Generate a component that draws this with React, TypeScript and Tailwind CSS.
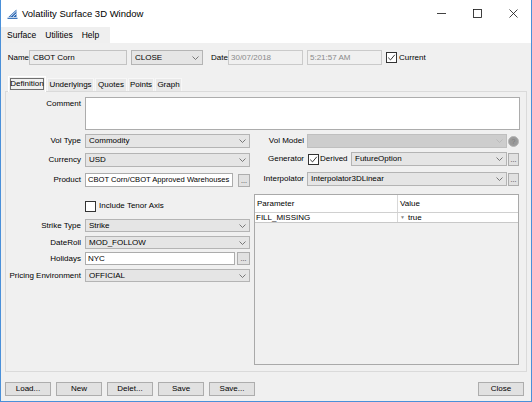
import React from "react";

function Chevron({ color = "#6a6a6a" }: { color?: string }) {
  return (
    <svg width="7" height="4" viewBox="0 0 7 4" className="shrink-0">
      <path d="M0.5 0.5 L3.5 3.5 L6.5 0.5" fill="none" stroke={color} strokeWidth="0.9" />
    </svg>
  );
}

function Combo({ className, children, disabled }: { className: string; children?: React.ReactNode; disabled?: boolean }) {
  return (
    <div
      className={
        "flex items-center border pl-[3px] pr-[3px] text-[8px] leading-none " +
        (disabled ? "bg-[#cdcdcd] border-[#bfbfbf] " : "bg-[#e5e5e5] border-[#b4b4b4] ") +
        className
      }
    >
      <span className="flex-1 truncate">{children}</span>
      <Chevron color={disabled ? "#b8b8b8" : "#6a6a6a"} />
    </div>
  );
}

function Field({ className, children }: { className: string; children?: React.ReactNode }) {
  return (
    <div className={"flex items-center border bg-white border-[#acacac] pl-[2px] leading-none whitespace-nowrap overflow-hidden " + className}>
      {children}
    </div>
  );
}

function Dots({ className }: { className: string }) {
  return (
    <div className={"flex items-end justify-center border border-[#adadad] bg-[#e1e1e1] pb-[2px] text-[7px] leading-none text-[#333] " + className}>
      ...
    </div>
  );
}

function Check({ checked }: { checked?: boolean }) {
  return (
    <div className="w-[11px] h-[11px] border border-[#333] bg-white flex items-center justify-center shrink-0">
      {checked && (
        <svg width="9" height="9" viewBox="0 0 9 9">
          <path d="M1.2 4.6 L3.5 6.9 L7.8 1.8" fill="none" stroke="#222" strokeWidth="0.9" />
        </svg>
      )}
    </div>
  );
}

function Label({ children, className = "" }: { children: React.ReactNode; className?: string }) {
  return <div className={"text-right text-[8px] leading-none whitespace-nowrap shrink-0 " + className}>{children}</div>;
}

function Btn({ children, className = "" }: { children: React.ReactNode; className?: string }) {
  return (
    <div className={"h-[14px] w-[46px] flex items-center justify-center border border-[#adadad] bg-[#e1e1e1] text-[8px] leading-none " + className}>
      {children}
    </div>
  );
}

export default function App() {
  return (
    <div className="w-[532px] h-[402px] bg-[#f0f0f0] border-x border-b border-[#4a90d9] flex flex-col overflow-hidden text-black font-['Liberation_Sans',Arial,sans-serif]">
      {/* Title bar */}
      <div className="h-[27px] bg-white flex items-center shrink-0">
        <div className="ml-[6px] w-[11px] h-[10px]">
          <svg width="11" height="10" viewBox="0 0 11 10">
            <polygon points="1.5,8 9.5,0.5 9.5,8" fill="#2b68b5" />
            <line x1="3.5" y1="7.5" x2="9.5" y2="2" stroke="#ffffff" strokeWidth="0.8" />
            <line x1="6" y1="7.8" x2="9.5" y2="4.6" stroke="#ffffff" strokeWidth="0.8" />
            <line x1="0.5" y1="9.3" x2="10.5" y2="9.3" stroke="#2b68b5" strokeWidth="1.2" />
          </svg>
        </div>
        <div className="ml-[4px] text-[9.5px] leading-none text-black">Volatility Surface 3D Window</div>
        <div className="ml-auto flex h-full">
          <div className="w-[36px] flex items-center justify-center">
            <svg width="9" height="9" viewBox="0 0 9 9">
              <line x1="0" y1="4.5" x2="9" y2="4.5" stroke="#111" strokeWidth="0.8" />
            </svg>
          </div>
          <div className="w-[36px] flex items-center justify-center">
            <svg width="9" height="9" viewBox="0 0 9 9">
              <rect x="0.5" y="0.5" width="8" height="8" fill="none" stroke="#111" strokeWidth="0.8" />
            </svg>
          </div>
          <div className="w-[36px] flex items-center justify-center">
            <svg width="9" height="9" viewBox="0 0 9 9">
              <path d="M0.5 0.5 L8.5 8.5 M8.5 0.5 L0.5 8.5" fill="none" stroke="#111" strokeWidth="0.8" />
            </svg>
          </div>
        </div>
      </div>

      {/* Menu bar */}
      <div className="h-[16px] bg-white flex shrink-0">
        <div className="w-[109px] bg-[#efefef] flex items-center gap-[9px] pl-[6px] text-[8.5px] leading-none">
          <span>Surface</span>
          <span>Utilities</span>
          <span>Help</span>
        </div>
      </div>

      {/* Top row */}
      <div className="mt-[7px] h-[15px] flex items-center pl-[4px] shrink-0">
        <Label className="w-[24px] text-left">Name</Label>
        <div className="w-[98px] h-full flex items-center border border-[#c3c3c3] bg-[#ececec] pl-[3px] text-[8px] leading-none">CBOT Corn</div>
        <Combo className="ml-[4px] w-[72px] h-full">CLOSE</Combo>
        <Label className="ml-[4px] w-[21px] text-left">Date</Label>
        <div className="w-[75px] h-full flex items-center border border-[#cacaca] bg-[#f0f0f0] pl-[2px] text-[8px] leading-none text-[#8a8a8a]">30/07/2018</div>
        <div className="ml-[4px] w-[75px] h-full flex items-center border border-[#cacaca] bg-[#f0f0f0] pl-[2px] text-[8px] leading-none text-[#8a8a8a]">5:21:57 AM</div>
        <div className="ml-[4px]">
          <Check checked />
        </div>
        <span className="ml-[2px] text-[8px] leading-none">Current</span>
      </div>

      {/* Tabs */}
      <div className="mt-[11px] h-[15px] flex items-end pl-[7px] gap-[1px] shrink-0">
        <div className="relative z-10 -mb-[1px] h-[16px] w-[38px] bg-[#f0f0f0] border-x border-t border-white flex items-start pt-[1px] px-[1px]">
          <div className="w-full h-[12px] border border-[#6f6f6f] flex items-center justify-center text-[8px] leading-none">Definition</div>
        </div>
        <div className="h-[13px] w-[47px] bg-[#e8e8e8] border-x border-t border-[#f7f7f7] flex items-center justify-center text-[8px] leading-none">Underlyings</div>
        <div className="h-[13px] w-[32px] bg-[#e8e8e8] border-x border-t border-[#f7f7f7] flex items-center justify-center text-[8px] leading-none">Quotes</div>
        <div className="h-[13px] w-[26px] bg-[#e8e8e8] border-x border-t border-[#f7f7f7] flex items-center justify-center text-[8px] leading-none">Points</div>
        <div className="h-[13px] w-[27px] bg-[#e8e8e8] border-x border-t border-[#f7f7f7] flex items-center justify-center text-[8px] leading-none">Graph</div>
      </div>

      {/* Tab panel */}
      <div className="ml-[4px] w-[522px] h-[281px] border border-[#dadada] flex flex-col pt-[5px] shrink-0">
        {/* Comment */}
        <div className="flex">
          <Label className="w-[75px] mr-[4px] pt-[3px]">Comment</Label>
          <div className="w-[435px] h-[33px] bg-white border border-[#acacac]" />
        </div>

        <div className="mt-[4px] flex">
          {/* Left column */}
          <div className="w-[244px] flex flex-col">
            <div className="h-[14px] flex items-center">
              <Label className="w-[75px] mr-[4px]">Vol Type</Label>
              <Combo className="w-[165px] h-full">Commodity</Combo>
            </div>
            <div className="mt-[5px] h-[14px] flex items-center">
              <Label className="w-[75px] mr-[4px]">Currency</Label>
              <Combo className="w-[165px] h-full">USD</Combo>
            </div>
            <div className="mt-[6px] h-[14px] flex items-center">
              <Label className="w-[75px] mr-[4px]">Product</Label>
              <Field className="w-[148px] h-full text-[7.6px] pl-[1px]">CBOT Corn/CBOT Approved Warehouses</Field>
              <Dots className="ml-[5px] w-[12px] h-[13px]" />
            </div>
            <div className="mt-[13px] h-[12px] flex items-center">
              <div className="w-[79px] shrink-0" />
              <Check />
              <span className="ml-[3px] text-[8px] leading-none">Include Tenor Axis</span>
            </div>
            <div className="mt-[7px] h-[13px] flex items-center">
              <Label className="w-[75px] mr-[4px]">Strike Type</Label>
              <Combo className="w-[165px] h-full">Strike</Combo>
            </div>
            <div className="mt-[4px] h-[13px] flex items-center">
              <Label className="w-[75px] mr-[4px]">DateRoll</Label>
              <Combo className="w-[165px] h-full">MOD_FOLLOW</Combo>
            </div>
            <div className="mt-[3px] h-[13px] flex items-center">
              <Label className="w-[75px] mr-[4px]">Holidays</Label>
              <Field className="w-[150px] h-full text-[8px]">NYC</Field>
              <Dots className="ml-[2px] w-[13px] h-[13px]" />
            </div>
            <div className="mt-[4px] h-[13px] flex items-center">
              <Label className="w-[75px] mr-[4px]">Pricing Environment</Label>
              <Combo className="w-[165px] h-full">OFFICIAL</Combo>
            </div>
          </div>

          {/* Right column */}
          <div className="ml-[4px] w-[265px] flex flex-col">
            <div className="h-[14px] flex items-center">
              <Label className="w-[50px] mr-[3px]">Vol Model</Label>
              <Combo disabled className="w-[200px] h-full" />
              <div className="ml-[1px] w-[11px] h-[11px] rounded-full bg-[#9a9a9a] border border-[#b5b5b5] flex items-center justify-center text-[7px] leading-none text-[#7c7c7c]">?</div>
            </div>
            <div className="mt-[4px] h-[14px] flex items-center">
              <Label className="w-[50px] mr-[4px]">Generator</Label>
              <Check checked />
              <span className="ml-[1px] w-[31px] text-[8px] leading-none">Derived</span>
              <Combo className="w-[156px] h-full">FutureOption</Combo>
              <Dots className="ml-[1px] w-[11px] h-[13px]" />
            </div>
            <div className="mt-[6px] h-[14px] flex items-center">
              <Label className="w-[50px] mr-[3px]">Interpolator</Label>
              <Combo className="w-[200px] h-full">Interpolator3DLinear</Combo>
              <Dots className="ml-[1px] w-[11px] h-[13px]" />
            </div>

            {/* Table */}
            <div className="mt-[8px] w-[265px] h-[171px] border border-[#a9a9a9] bg-[#f0f0f0] flex flex-col">
              <div className="h-[18px] bg-white flex border-b border-[#d0d0d0] text-[8px] leading-none">
                <div className="w-[143px] border-r border-[#d8d8d8] flex items-center pl-[2px]">Parameter</div>
                <div className="flex-1 flex items-center pl-[2px]">Value</div>
              </div>
              <div className="h-[10px] bg-white flex border-b border-[#c8c8c8] text-[8px] leading-none">
                <div className="w-[143px] border-r border-[#d8d8d8] flex items-center pl-[1px]">FILL_MISSING</div>
                <div className="flex-1 flex items-center pl-[2px]">
                  <span className="text-[5px] text-[#888] mr-[3px]">▼</span>
                  <span>true</span>
                </div>
              </div>
            </div>
          </div>
        </div>
      </div>

      {/* Buttons */}
      <div className="mt-[10px] flex items-center pl-[4px] pr-[7px] gap-[5px] shrink-0">
        <Btn>Load...</Btn>
        <Btn>New</Btn>
        <Btn>Delet...</Btn>
        <Btn>Save</Btn>
        <Btn>Save...</Btn>
        <Btn className="ml-auto">Close</Btn>
      </div>
    </div>
  );
}
